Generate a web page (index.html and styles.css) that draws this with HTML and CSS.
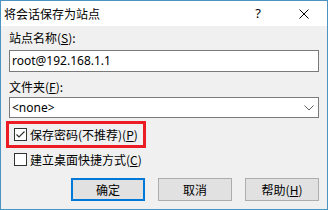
FILE: index.html
```html
<!DOCTYPE html>
<html lang="zh-CN">
<head>
    <meta charset="UTF-8">
    <title>将会话保存为站点</title>
    <link rel="stylesheet" href="styles.css">
</head>
<body>
    <div class="dialog">
        <div class="titlebar">
            <span class="title">将会话保存为站点</span>
            <span class="caption-btn help-btn">?</span>
            <span class="caption-btn">
                <svg width="10" height="10" viewBox="0 0 10 10">
                    <path d="M0.5 0.5 L9.5 9.5 M9.5 0.5 L0.5 9.5" stroke="#000" stroke-width="1" fill="none"/>
                </svg>
            </span>
        </div>
        <div class="content">
            <div class="field-label">站点名称(<u>S</u>):</div>
            <div class="textbox">root@192.168.1.1</div>

            <div class="field-label folder-label">文件夹(<u>F</u>):</div>
            <div class="combo">
                <span>&lt;none&gt;</span>
                <svg width="10" height="6" viewBox="0 0 10 6">
                    <path d="M0.5 0.5 L5 5 L9.5 0.5" stroke="#606060" stroke-width="1" fill="none"/>
                </svg>
            </div>

            <div class="highlight">
                <div class="check-row">
                    <span class="checkbox">
                        <svg width="11" height="11" viewBox="0 0 11 11">
                            <path d="M1.5 5.5 L4 8 L9.5 2.5" stroke="#333" stroke-width="1.2" fill="none"/>
                        </svg>
                    </span>
                    <span>保存密码(不推荐)(<u>P</u>)</span>
                </div>
            </div>

            <div class="check-row second">
                <span class="checkbox"></span>
                <span>建立桌面快捷方式(<u>C</u>)</span>
            </div>

            <div class="buttons">
                <button class="btn default">确定</button>
                <button class="btn">取消</button>
                <button class="btn">帮助(<u>H</u>)</button>
            </div>
        </div>
    </div>
</body>
</html>
```

FILE: styles.css
```css
body {
    margin: 0;
    font-family: "Noto Sans", "Noto Sans CJK SC", sans-serif;
    font-size: 12px;
    color: #000;
}
.dialog {
    width: 328px;
    height: 210px;
    box-sizing: border-box;
    border: 1px solid #4a94c4;
    background: #f0f0f0;
    display: flex;
    flex-direction: column;
}
.titlebar {
    height: 25px;
    background: #fff;
    display: flex;
    align-items: center;
}
.title {
    flex: 1;
    padding-left: 3px;
    font-family: "Noto Sans CJK SC", sans-serif;
    line-height: 25px;
}
.caption-btn {
    width: 46px;
    height: 25px;
    display: flex;
    align-items: center;
    justify-content: center;
}
.help-btn {
    font-size: 13px;
    padding-bottom: 1px;
    box-sizing: border-box;
}
.content {
    flex: 1;
    padding: 4px 8px 0 8px;
    display: flex;
    flex-direction: column;
}
.field-label {
    line-height: 16px;
    height: 16px;
    font-family: "Noto Sans CJK SC", sans-serif;
}
.textbox {
    margin-top: 4px;
    height: 22px;
    box-sizing: border-box;
    border: 1px solid #7a7a7a;
    background: #fff;
    padding-left: 2px;
    line-height: 20px;
}
.folder-label {
    margin-top: 7px;
}
.combo {
    margin-top: 2px;
    height: 21px;
    box-sizing: border-box;
    border: 1px solid #7a7a7a;
    background: #fff;
    padding: 0 4px 0 2px;
    display: flex;
    align-items: center;
    justify-content: space-between;
    line-height: 19px;
}
.highlight {
    margin-top: 3px;
    margin-left: -3px;
    width: 140px;
    height: 27px;
    box-sizing: border-box;
    border: 3px solid #ec1c24;
    padding-left: 5px;
}
.check-row {
    height: 21px;
    display: flex;
    align-items: center;
    gap: 3px;
    font-family: "Noto Sans CJK SC", sans-serif;
    white-space: nowrap;
}
.check-row.second {
    margin-top: 1px;
    padding-left: 5px;
}
.checkbox {
    width: 13px;
    height: 13px;
    box-sizing: border-box;
    border: 1px solid #333;
    background: #fff;
    display: flex;
    align-items: center;
    justify-content: center;
}
.buttons {
    margin-top: 8px;
    display: flex;
    justify-content: flex-end;
    gap: 13px;
}
.btn {
    width: 74px;
    height: 23px;
    box-sizing: border-box;
    border: 1px solid #adadad;
    background: #e1e1e1;
    font-family: "Noto Sans CJK SC", sans-serif;
    font-size: 12px;
    color: #000;
    padding: 0;
    margin: 0;
}
.btn.default {
    border: 2px solid #0078d7;
}
```
